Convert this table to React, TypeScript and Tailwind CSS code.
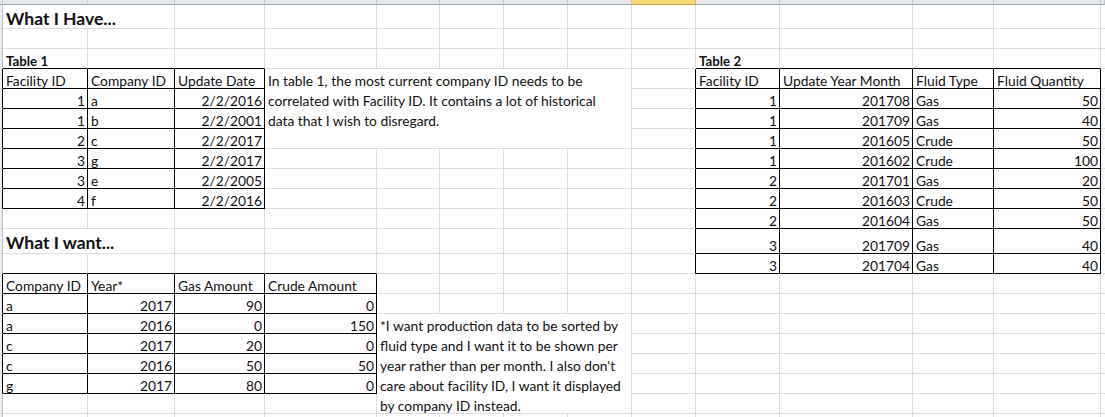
import React from 'react';

type Align = 'l' | 'r';
interface CellData {
  t: string;
  a: Align;
  kind?: 'head' | 'label';
  noRight?: boolean;
}

// Excel-ish sheet: col 0 and row 0 are the clipped row / column headers
const COLS = 15;
const ROWS = 22;

const tables = [
  { r1: 4, c1: 1, r2: 10, c2: 3 },
  { r1: 4, c1: 10, r2: 13, c2: 13 },
  { r1: 14, c1: 1, r2: 19, c2: 4 },
];

const inTable = (r: number, c: number) =>
  tables.some((t) => r >= t.r1 && r <= t.r2 && c >= t.c1 && c <= t.c2);

const cells: Record<string, CellData> = {};
const put = (r: number, c: number, t: string, a: Align = 'l', kind?: 'head' | 'label') => {
  cells[`${r},${c}`] = { t, a, kind };
};

put(1, 1, 'What I Have...', 'l', 'head');
cells['1,1'].noRight = true;
put(3, 1, 'Table 1', 'l', 'label');
put(3, 10, 'Table 2', 'l', 'label');

['Facility ID', 'Company ID', 'Update Date'].forEach((h, i) => put(4, 1 + i, h));
const table1: [string, string, string][] = [
  ['1', 'a', '2/2/2016'],
  ['1', 'b', '2/2/2001'],
  ['2', 'c', '2/2/2017'],
  ['3', 'g', '2/2/2017'],
  ['3', 'e', '2/2/2005'],
  ['4', 'f', '2/2/2016'],
];
table1.forEach((row, i) => {
  put(5 + i, 1, row[0], 'r');
  put(5 + i, 2, row[1]);
  put(5 + i, 3, row[2], 'r');
});

['Facility ID', 'Update Year Month', 'Fluid Type', 'Fluid Quantity'].forEach((h, i) => put(4, 10 + i, h));
const table2: [string, string, string, string][] = [
  ['1', '201708', 'Gas', '50'],
  ['1', '201709', 'Gas', '40'],
  ['1', '201605', 'Crude', '50'],
  ['1', '201602', 'Crude', '100'],
  ['2', '201701', 'Gas', '20'],
  ['2', '201603', 'Crude', '50'],
  ['2', '201604', 'Gas', '50'],
  ['3', '201709', 'Gas', '40'],
  ['3', '201704', 'Gas', '40'],
];
table2.forEach((row, i) => {
  put(5 + i, 10, row[0], 'r');
  put(5 + i, 11, row[1], 'r');
  put(5 + i, 12, row[2]);
  put(5 + i, 13, row[3], 'r');
});

put(12, 1, 'What I want...', 'l', 'head');
cells['12,1'].noRight = true;

['Company ID', 'Year*', 'Gas Amount', 'Crude Amount'].forEach((h, i) => put(14, 1 + i, h));
const table3: [string, string, string, string][] = [
  ['a', '2017', '90', '0'],
  ['a', '2016', '0', '150'],
  ['c', '2017', '20', '0'],
  ['c', '2016', '50', '50'],
  ['g', '2017', '80', '0'],
];
table3.forEach((row, i) => {
  put(15 + i, 1, row[0]);
  put(15 + i, 2, row[1], 'r');
  put(15 + i, 3, row[2], 'r');
  put(15 + i, 4, row[3], 'r');
});

const merges = [
  {
    r: 4, c: 4, rs: 4, cs: 5,
    cls: 'col-span-5 row-span-4',
    lines: [
      'In table 1, the most current company ID needs to be',
      'correlated with Facility ID. It contains a lot of historical',
      'data that I wish to disregard.',
    ],
  },
  {
    r: 16, c: 5, rs: 5, cs: 4,
    cls: 'col-span-4 row-span-5',
    lines: [
      '*I want production data to be sorted by',
      'fluid type and I want it to be shown per',
      "year rather than per month. I also don't",
      'care about facility ID, I want it displayed',
      'by company ID instead.',
    ],
  },
];

const covered = (r: number, c: number) =>
  merges.some((m) => r >= m.r && r < m.r + m.rs && c >= m.c && c < m.c + m.cs && !(r === m.r && c === m.c));

const App: React.FC = () => {
  const out: React.ReactNode[] = [];

  for (let r = 0; r < ROWS; r++) {
    for (let c = 0; c < COLS; c++) {
      const key = `${r},${c}`;
      if (covered(r, c)) continue;

      const merge = merges.find((m) => m.r === r && m.c === c);
      if (merge) {
        out.push(
          <div
            key={key}
            className={`${merge.cls} border-r border-b border-r-[#dadcdf] border-b-[#dadcdf] pl-[3px] pt-[2px] leading-[20px] whitespace-nowrap`}
          >
            {merge.lines.map((l) => (
              <div key={l}>{l}</div>
            ))}
          </div>
        );
        continue;
      }

      // clipped column header strip
      if (r === 0) {
        out.push(
          <div
            key={key}
            className={
              c === 9
                ? 'bg-[#f7d877] border-b border-r border-b-[#c9a447] border-r-[#d7b65e]'
                : 'bg-[#e3e6ea] border-b border-r border-b-[#9ea6b0] border-r-[#c3c8ce]'
            }
          />
        );
        continue;
      }

      // clipped row header strip
      if (c === 0) {
        out.push(
          <div
            key={key}
            className={`bg-[#eceef1] border-r ${inTable(r, 1) ? 'border-r-black' : 'border-r-[#b9bfc7]'} ${
              r < ROWS - 1 ? 'border-b border-b-[#d3d7dc]' : ''
            }`}
          />
        );
        continue;
      }

      const d = cells[key];
      const right =
        c === COLS - 1
          ? ''
          : inTable(r, c) || inTable(r, c + 1)
          ? 'border-r border-r-black'
          : d?.noRight
          ? 'border-r border-r-transparent'
          : 'border-r border-r-[#dadcdf]';
      const bottom =
        r === ROWS - 1
          ? ''
          : inTable(r, c) || inTable(r + 1, c)
          ? 'border-b border-b-black'
          : 'border-b border-b-[#dadcdf]';

      let text: React.ReactNode = null;
      if (d) {
        const size =
          d.kind === 'head'
            ? `text-[17.5px] font-bold leading-[17px] ${r === 12 ? 'pb-[2px]' : 'pb-px'}`
            : d.kind === 'label'
            ? 'text-[13.3px] font-bold leading-[14px]'
            : 'leading-[14px]';
        text = (
          <span
            className={`${size} whitespace-nowrap ${d.a === 'r' ? 'ml-auto pr-[2px]' : 'pl-[3px]'}`}
          >
            {d.t}
          </span>
        );
      }

      out.push(
        <div key={key} className={`flex items-end min-w-0 ${right} ${bottom}`}>
          {text}
        </div>
      );
    }
  }

  return (
    <div className="w-[1105px] h-[417px] overflow-hidden bg-white text-[#111] text-[13.8px] font-['Lato','Liberation_Sans',sans-serif]">
      <div className="grid h-full grid-cols-[3px_85px_87px_90px_112px_63px_64px_64px_64px_64px_84px_133px_81px_107px_1fr] grid-rows-[5px_24px_20px_20px_20px_20px_20px_20px_20px_20px_20px_20px_25px_20px_20px_20px_20px_20px_20px_20px_20px_3px]">
        {out}
      </div>
    </div>
  );
};

export default App;
